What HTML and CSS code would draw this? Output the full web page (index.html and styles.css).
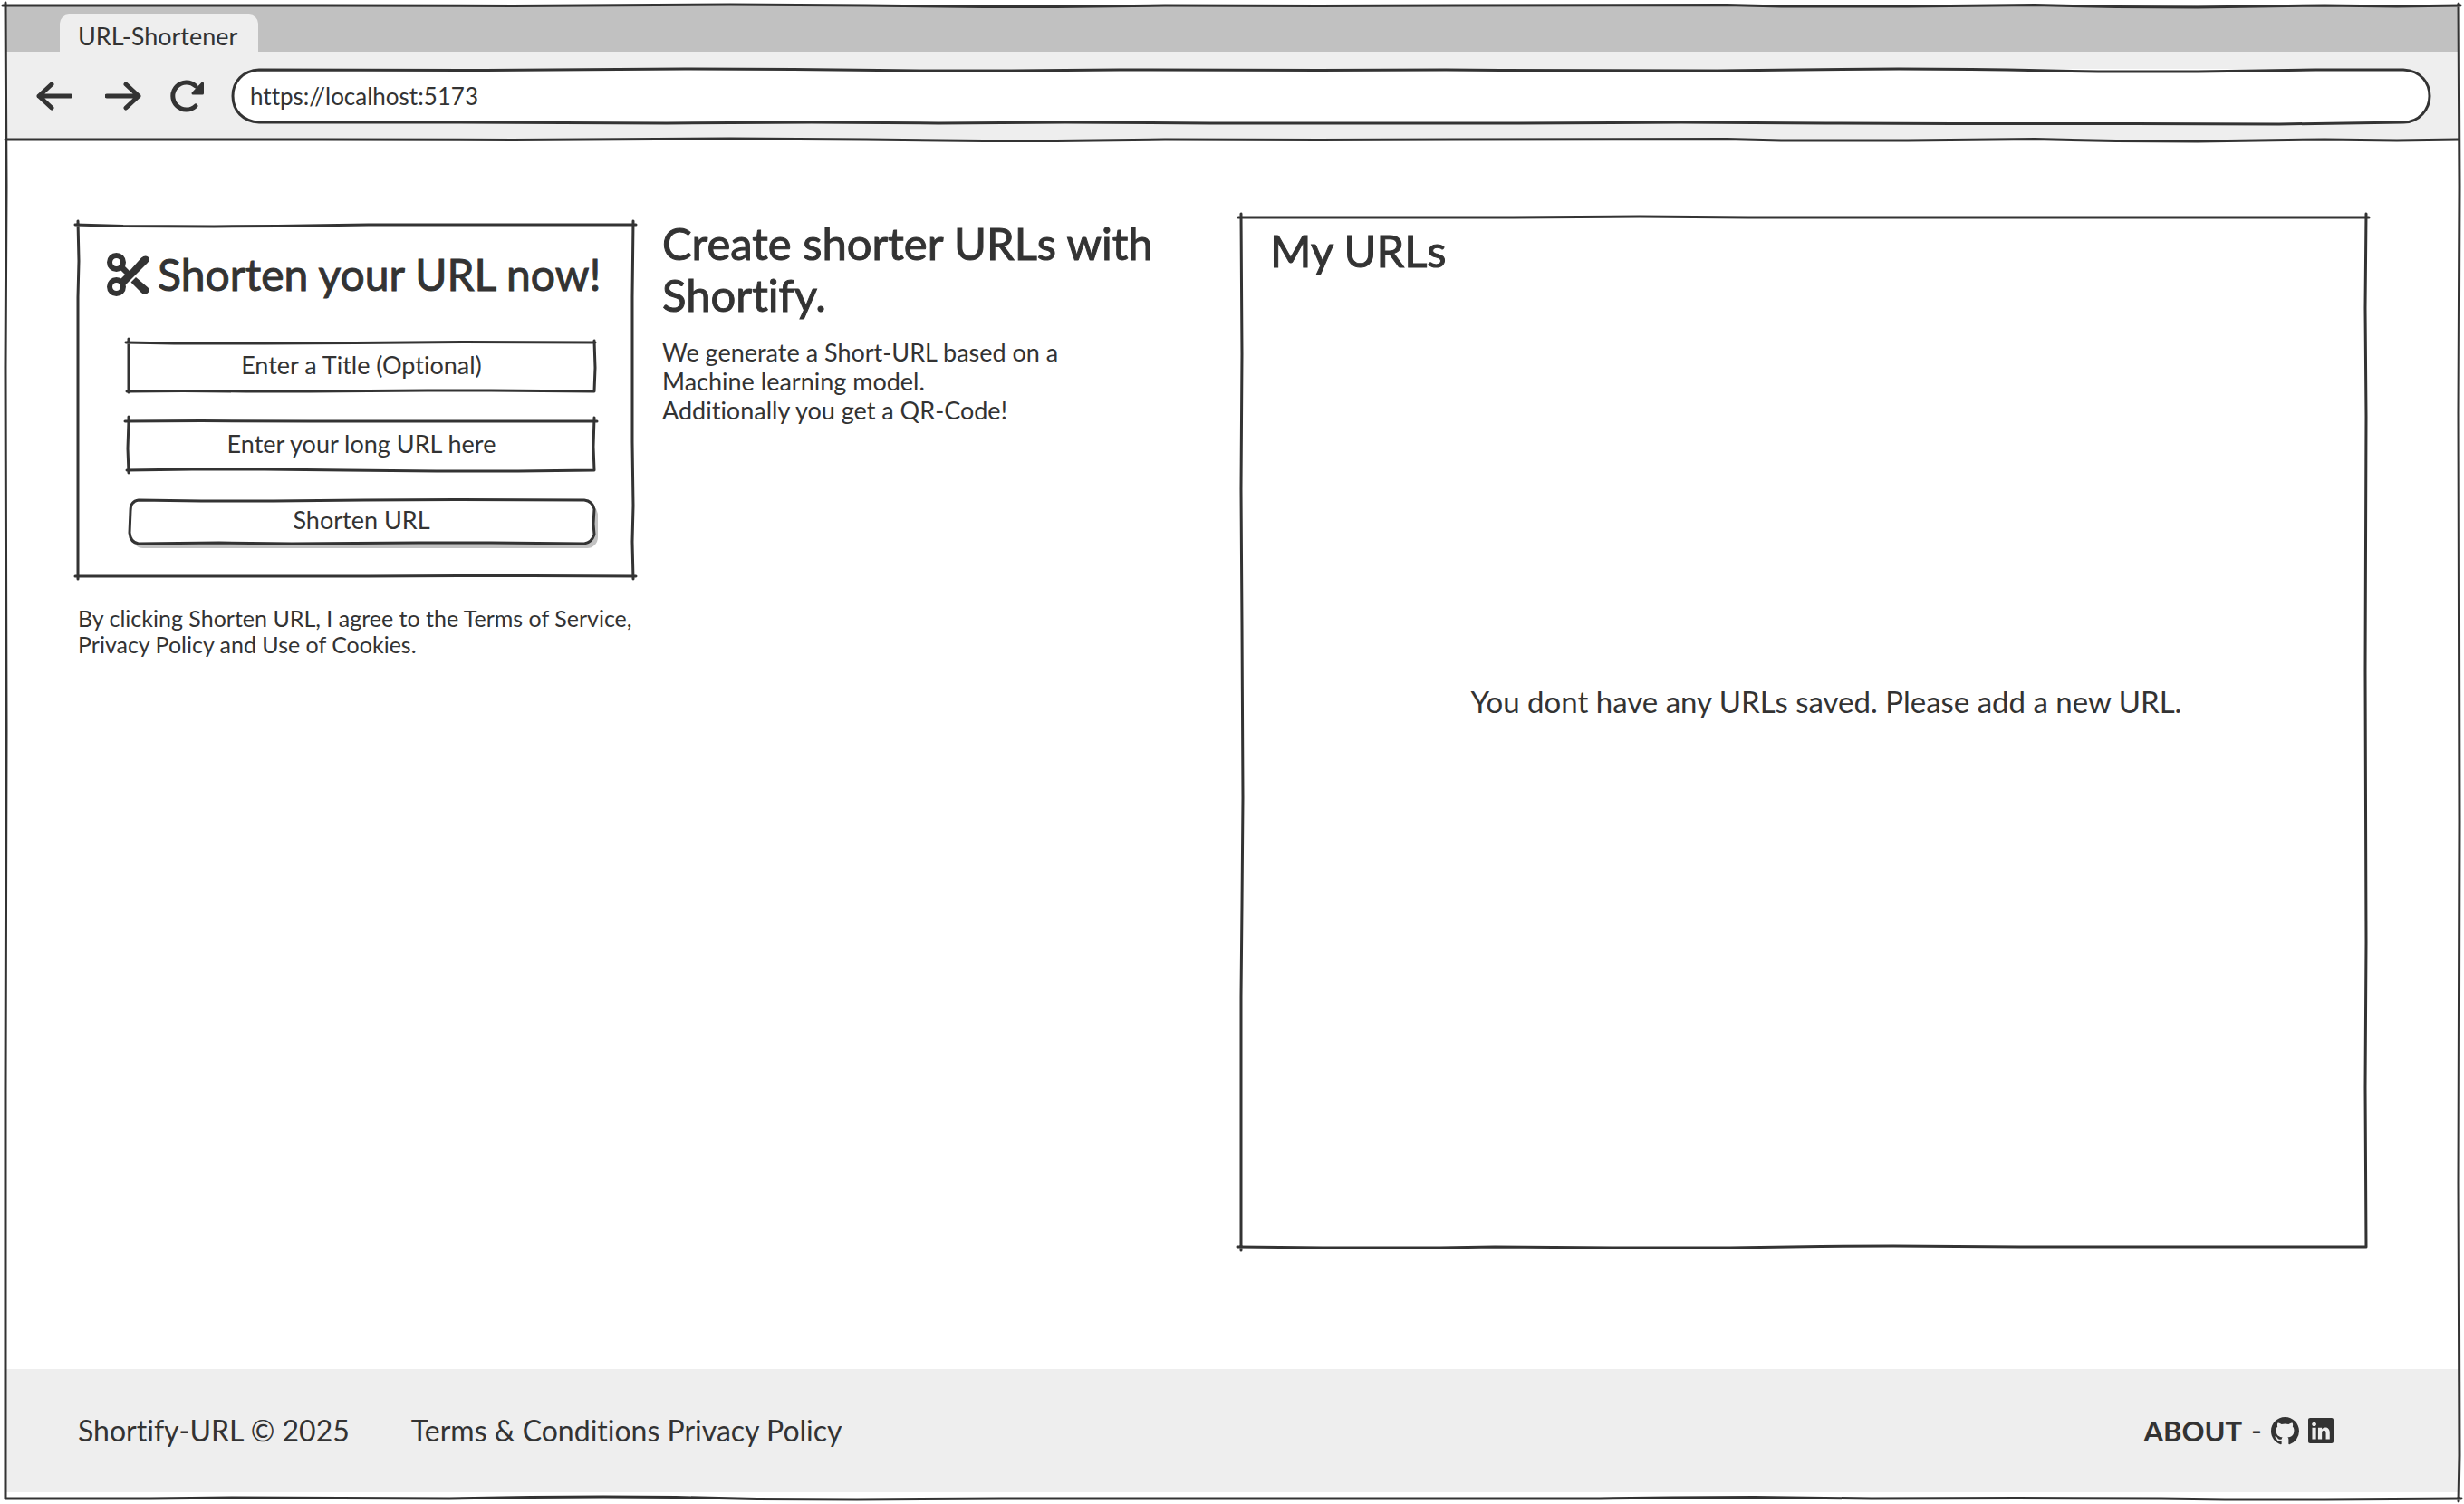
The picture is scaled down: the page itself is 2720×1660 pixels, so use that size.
FILE: index.html
```html
<!DOCTYPE html>
<html lang="en">
<head>
<meta charset="utf-8">
<meta name="viewport" content="width=device-width, initial-scale=1">
<title>URL-Shortener</title>
<link rel="stylesheet" href="styles.css">
</head>
<body>
<div class="window">
  <header class="chrome">
    <div class="tabs"><span class="tab">URL-Shortener</span></div>
    <div class="toolbar">
      <button class="nav-button" type="button" aria-label="Back">
        <svg class="nav-icon" viewBox="0 0 40 40"><path d="M3 20H38M17 7L3 20L17 33"/></svg>
      </button>
      <button class="nav-button" type="button" aria-label="Forward">
        <svg class="nav-icon" viewBox="0 0 40 40"><path d="M2 20H37M23 7L37 20L23 33"/></svg>
      </button>
      <button class="nav-button" type="button" aria-label="Reload">
        <svg class="nav-icon" viewBox="0 0 40 40"><path d="M30 31A15 15 0 1 1 30 9"/><path class="solid" d="M37.500 6V17H27Z"/></svg>
      </button>
      <div class="address">
        <input class="address-input" type="text" aria-label="Address" value="https://localhost:5173">
        <svg class="sketch" viewBox="0 0 2427 60" preserveAspectRatio="none" aria-hidden="true"><path d="M30 1L280 1.500L500 0L620 0.500L760 2L860 2L980 1L1200 1.500L1340 1L1400 1.500L1640 2L1730 1L1840 0L1920 0.500L1960 1L2060 3L2170 3L2300 1L2397 1C2417 2 2426 16 2426 30S2415 59 2397 59L2260 61L2100 60.500L1900 60.500L1760 60L1600 59L1420 60L1240 60L1080 60L920 59L780 60L640 59L480 60L240 59L30 59C12 58 1 46 1 30S12 2 30 1Z"/></svg>
      </div>
      <svg class="sketch" viewBox="0 0 2708 98" preserveAspectRatio="none" aria-hidden="true"><path d="M0 97L350 97L560 97.500L800 96L950 97L1080 98.500L1160 98.500L1280 97L1450 97.500L1600 97L1900 96.500L1960 98L2100 98L2240 96.500L2330 98.500L2420 99L2560 97L2640 98L2708 97"/></svg>
    </div>
  </header>

  <main class="content">
    <section class="shorten">
      <form class="card">
        <h1 class="card-title">
          <svg class="scissors" viewBox="0 0 47 48" aria-hidden="true">
            <circle cx="10.500" cy="10.500" r="7.500"/><circle cx="10.500" cy="37.500" r="7.500"/>
            <path class="solid" d="M14 18L19 14L25 20L38 5.500Q42 2 45.500 4.500Q48.500 8 45 11L18 38L14 30L20 24Z"/>
            <path class="solid" d="M26.500 32.500L32 27L45.500 38.500Q48.500 42 45 44.500Q41.500 47.500 38 44Z"/>
          </svg>
          <span>Shorten your URL now!</span>
        </h1>
        <div class="fields">
          <div class="field">
            <input class="field-input" type="text" aria-label="Title" placeholder="Enter a Title (Optional)">
            <svg class="sketch" viewBox="0 0 514 54" preserveAspectRatio="none" aria-hidden="true"><path d="M-3 0L50 1L150 1L250 0.500L370 -0.500L515 0M-2 54L60 53.500L130 54L200 54L330 53L400 53L514 54M0 -4V55M514 -2L515 28L514 54"/></svg>
          </div>
          <div class="field">
            <input class="field-input" type="url" aria-label="Long URL" placeholder="Enter your long URL here">
            <svg class="sketch" viewBox="0 0 514 54" preserveAspectRatio="none" aria-hidden="true"><path d="M-4 0L80 -0.500L200 0L360 0L517 0M-2 54L70 53L150 53L240 54L340 55L430 55L514 54M0 -5V0L-1 30L0 57M514 -4L513 28L514 54"/></svg>
          </div>
          <button class="submit" type="submit">Shorten URL
            <svg class="sketch" viewBox="0 0 514 48" preserveAspectRatio="none" aria-hidden="true"><path d="M11 0L80 1L160 1L260 0L360 -0.500L503 0Q512 1 514 10L513 26L514 38Q511 47 503 48L400 47L320 47L180 48L100 47L11 48Q2 47 1 36L2 12Q2 1 11 0Z"/></svg>
          </button>
        </div>
        <svg class="sketch" viewBox="0 0 612 388" preserveAspectRatio="none" aria-hidden="true"><path d="M-3 0L50 1.500L150 2L220 1.500L320 0L615 0M-3 388L320 388L420 387.500L500 387.500L615 388M0 -4L1 40L0 80L0 391M612 -4L611 80L611 240L612 310L611 350L612 391"/></svg>
      </form>
      <p class="agreement">By clicking Shorten URL, I agree to the Terms of Service, Privacy Policy and Use of Cookies.</p>
    </section>

    <section class="intro">
      <h2 class="heading">Create shorter URLs with Shortify.</h2>
      <p class="intro-text">We generate a Short-URL based on a<br>Machine learning model.<br>Additionally you get a QR-Code!</p>
    </section>

    <section class="saved">
      <h2 class="heading">My URLs</h2>
      <p class="empty">You dont have any URLs saved. Please add a new URL.</p>
      <svg class="sketch" viewBox="0 0 1242 1136" preserveAspectRatio="none" aria-hidden="true"><path d="M-3 0H300L440 -1L560 0H1245M-4 1136L90 1137L220 1137L280 1136L420 1137L540 1137L640 1135.500L720 1135L860 1136L1242 1136M0 -4L1 150L0 300L1 450L2 640L1 760L0 860V1140M1242 -4L1241 100L1242 220L1241 500L1242 800L1241 960L1242 1136"/></svg>
    </section>
  </main>

  <footer class="footer">
    <span>Shortify-URL © 2025</span>
    <nav class="legal"><a href="#terms">Terms &amp; Conditions</a> <a href="#privacy">Privacy Policy</a></nav>
    <div class="about">
      <a class="about-link" href="#about">ABOUT</a><span>-</span>
      <a class="social" href="#github" aria-label="GitHub"><svg class="github" viewBox="0 0 16 16"><path d="M8 0C3.580 0 0 3.580 0 8c0 3.540 2.290 6.530 5.470 7.590.4.070.55-.17.55-.38 0-.19-.01-.82-.01-1.490-2.010.37-2.530-.49-2.690-.94-.09-.23-.48-.94-.82-1.130-.28-.15-.68-.52-.01-.53.63-.01 1.080.58 1.230.82.72 1.210 1.870.87 2.330.66.07-.52.28-.87.51-1.070-1.780-.2-3.640-.89-3.640-3.950 0-.87.31-1.590.82-2.150-.08-.2-.36-1.020.08-2.120 0 0 .67-.21 2.200.82.64-.18 1.320-.27 2-.27s1.360.09 2 .27c1.530-1.040 2.200-.82 2.200-.82.44 1.100.16 1.920.08 2.120.51.56.82 1.270.82 2.150 0 3.070-1.870 3.750-3.650 3.950.29.25.54.73.54 1.480 0 1.070-.01 1.930-.01 2.200 0 .21.15.46.55.38A8.010 8.010 0 0 0 16 8c0-4.420-3.580-8-8-8z"/></svg></a>
      <a class="social" href="#linkedin" aria-label="LinkedIn"><svg class="linkedin" viewBox="0 0 16 16"><path d="M0 1.146C0 .513.526 0 1.175 0h13.650C15.474 0 16 .513 16 1.146v13.708c0 .633-.526 1.146-1.175 1.146H1.175C.526 16 0 15.487 0 14.854zm4.943 12.248V6.169H2.542v7.225zm-1.200-8.212c.837 0 1.358-.554 1.358-1.248-.015-.709-.52-1.248-1.342-1.248S2.400 3.226 2.400 3.934c0 .694.521 1.248 1.327 1.248zm4.908 8.212V9.359c0-.216.016-.432.08-.586.173-.431.568-.878 1.232-.878.869 0 1.216.662 1.216 1.634v3.865h2.401V9.250c0-2.220-1.184-3.252-2.764-3.252-1.274 0-1.845.7-2.165 1.193v.025h-.016l.016-.025V6.169h-2.400c.03.678 0 7.225 0 7.225z"/></svg></a>
    </div>
  </footer>
  <svg class="sketch" viewBox="0 0 2708 1648" preserveAspectRatio="none" aria-hidden="true"><path d="M-3 0L350 0L560 0.500L800 -1L950 0L1080 1.500L1160 1.500L1280 0L1450 0.500L1600 0L1900 -0.500L1960 1L2100 1L2240 -0.500L2330 1.500L2420 2L2560 0L2640 1L2710 0M0 1648L160 1648L250 1647L370 1647.500L490 1648L580 1646.500L660 1646L740 1646.500L830 1648.500L940 1649L1100 1648H1760L1840 1647L1930 1646.500L2060 1648L2220 1647.500L2380 1648L2450 1649L2560 1649L2711 1648M0 -3L1 200L0 400L1 800L0 1200V1648M2708 -2L2709 200L2708 450L2709 900L2708 1300L2709 1600L2708 1651"/></svg>
</div>
</body>
</html>
```
FILE: styles.css
```css
* {
  box-sizing: border-box;
}

body {
  margin: 0;
  padding: 6px;
  background: #fff;
  color: #333;
  font-family: Lato, sans-serif;
  font-size: 27px;
  font-variant-ligatures: none;
  line-height: 32px;
}

h1,
h2,
p {
  margin: 0;
}

a {
  color: inherit;
  text-decoration: none;
}

input,
button {
  color: inherit;
  font: inherit;
  font-variant-ligatures: none;
}

/* hand-drawn outlines laid over their box */
.sketch {
  position: absolute;
  inset: 0;
  width: 100%;
  height: 100%;
  overflow: visible;
  pointer-events: none;
  fill: none;
  stroke: #333;
  stroke-width: 3px;
  stroke-linecap: round;
  stroke-linejoin: round;
}

.sketch path {
  vector-effect: non-scaling-stroke;
}

.window {
  position: relative;
  display: flex;
  flex-direction: column;
  min-height: calc(100vh - 12px);
  padding-bottom: 7px;
}

/* browser chrome */
.tabs {
  display: flex;
  align-items: flex-end;
  height: 51px;
  padding-left: 60px;
  background: #c1c1c1;
}

.tab {
  height: 41px;
  min-width: 219px;
  padding: 8px 20px 0;
  border-radius: 10px 10px 0 0;
  background: #eee;
}

.toolbar {
  position: relative;
  display: flex;
  align-items: center;
  height: 98px;
  padding: 0 31px 0 34px;
  background: #eee;
}

.nav-button {
  display: flex;
  margin-right: 30px;
  padding: 0;
  border: 0;
  background: none;
}

.nav-button:first-child {
  margin-right: 36px;
}

.nav-icon {
  width: 40px;
  height: 40px;
  fill: none;
  stroke: #333;
  stroke-width: 5px;
  stroke-linecap: round;
  stroke-linejoin: round;
}

.nav-icon .solid {
  fill: #333;
  stroke-width: 3px;
}

.address {
  position: relative;
  flex: 1;
  height: 60px;
}

.address-input {
  width: 100%;
  height: 60px;
  padding: 0 20px;
  border: 0;
  border-radius: 30px;
  background: #fff;
  font-size: 26px;
}

/* page */
.content {
  flex: 1;
  display: grid;
  grid-template-columns: 613fr 607fr 1242fr;
  gap: 32px;
  padding: 85px 102px 135px 80px;
}

.shorten {
  padding-top: 8px;
}

.card {
  position: relative;
  padding: 26px 32px 36px;
}

.card-title,
.heading {
  font-size: 49px;
  font-weight: 400;
  line-height: 57px;
  -webkit-text-stroke: 1px #333;
}

.card-title {
  display: flex;
  align-items: center;
  gap: 9px;
  margin-bottom: 47px;
  font-size: 48px;
}

.scissors {
  flex: none;
  width: 47px;
  height: 48px;
  fill: none;
  stroke: #333;
  stroke-width: 6px;
}

.scissors .solid {
  fill: #333;
  stroke: none;
}

.fields {
  display: flex;
  flex-direction: column;
  gap: 33px;
  padding: 0 11px 0 24px;
}

.field {
  position: relative;
  height: 54px;
}

.field-input {
  width: 100%;
  height: 54px;
  padding: 0 8px 5px;
  border: 0;
  background: #fff;
  text-align: center;
}

.field-input::placeholder {
  color: #333;
  opacity: 1;
}

.submit {
  position: relative;
  height: 48px;
  padding: 0 8px 5px;
  border: 0;
  border-radius: 12px;
  background: #fff;
  box-shadow: 4px 5px 0 #c1c1c1;
}

.agreement {
  margin-top: 32px;
  font-size: 25px;
  line-height: 29px;
}

.intro .heading {
  margin-bottom: 19px;
}

.saved {
  position: relative;
  display: flex;
  flex-direction: column;
  padding: 8px 0 134px 32px;
}

.empty {
  flex: 1;
  display: flex;
  align-items: center;
  justify-content: center;
  padding-left: 18px;
  font-size: 33px;
}

.footer {
  display: flex;
  align-items: center;
  height: 136px;
  padding: 0 138px 0 80px;
  background: #eee;
  font-size: 32px;
}

.legal {
  margin-left: 68px;
}

.about {
  display: flex;
  align-items: center;
  gap: 10px;
  margin-left: auto;
}

.about-link {
  font-size: 31px;
  font-weight: 700;
}

.social {
  display: flex;
}

.github {
  width: 31px;
  height: 31px;
  fill: #333;
}

.linkedin {
  width: 28px;
  height: 28px;
  fill: #333;
}

@media (max-width: 1800px) {
  .content {
    grid-template-columns: 1fr;
    padding: 48px 32px;
  }

  .shorten {
    max-width: 680px;
  }

  .saved {
    min-height: 480px;
  }
}
```
